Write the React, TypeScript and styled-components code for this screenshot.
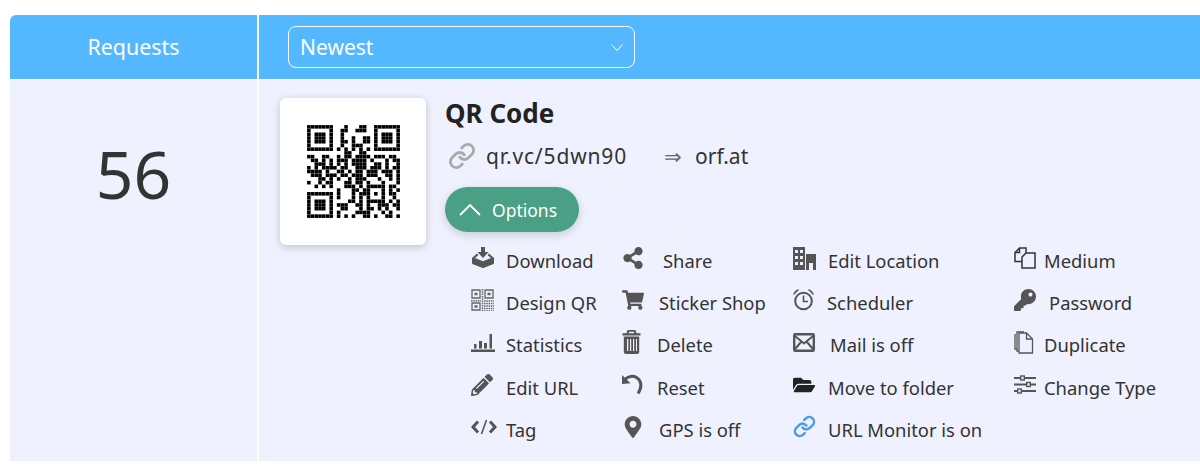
import React from "react";
import styled, { createGlobalStyle } from "styled-components";
import {
  FaShareAlt,
  FaShoppingCart,
  FaPencilAlt,
  FaMapMarkerAlt,
  FaFolderOpen,
  FaKey,
} from "react-icons/fa";
import { Link as LinkIcon } from "lucide-react";

const GlobalStyle = createGlobalStyle`
  html, body {
    margin: 0;
    padding: 0;
    background: #fff;
    font-family: "Noto Sans", "Open Sans", sans-serif;
    overflow: hidden;
  }
`;

const Page = styled.div`
  padding: 15px 0 0 10px;
`;

const HeaderRow = styled.div`
  display: grid;
  grid-template-columns: 247px 1fr;
  column-gap: 2px;
  height: 64px;
`;

const HeaderCell = styled.div`
  display: flex;
  align-items: center;
  justify-content: center;
  padding-bottom: 2px;
  box-sizing: border-box;
  color: #fff;
  font-size: 21.4px;
  background: #54b8fe;
  border-top-left-radius: 6px;
`;

const SortCell = styled.div`
  display: flex;
  align-items: center;
  padding-left: 29px;
  background: #54b8fe;
`;

const SortBox = styled.div`
  box-sizing: border-box;
  width: 347px;
  height: 42px;
  border: 1px solid #fff;
  border-radius: 8px;
  display: flex;
  align-items: center;
  justify-content: space-between;
  padding: 0 10px 0 11px;
  color: #fff;
  font-size: 21px;
`;

const BodyRow = styled.div`
  display: grid;
  grid-template-columns: 247px 1fr;
  column-gap: 2px;
  height: 381px;
  margin-top: 1px;
`;

const CountCell = styled.div`
  background: #eff1fe;
  color: #333;
  font-size: 66px;
  line-height: 90px;
  text-align: center;
  padding-top: 48px;
`;

const MainCell = styled.div`
  background: #eff1fe;
  display: flex;
  align-items: flex-start;
  gap: 19px;
  padding: 18px 0 0 21px;
`;

const QrCard = styled.div`
  flex: none;
  width: 146px;
  height: 147px;
  background: #fff;
  border-radius: 6px;
  box-shadow: 0 2px 8px rgba(0, 0, 0, 0.2);
  display: flex;
  align-items: center;
  justify-content: center;
`;

const Info = styled.div`
  flex: 1;
  min-width: 0;
`;

const Title = styled.h2`
  margin: 0;
  font-size: 26px;
  line-height: 30px;
  font-weight: 700;
  color: #222;
`;

const LinkRow = styled.div`
  display: flex;
  align-items: center;
  margin: 14px 0 0 3px;
  height: 28px;
  font-size: 21px;
  color: #333;
`;

const ShortUrl = styled.span`
  margin-left: 10px;
  letter-spacing: 0.85px;
`;

const Target = styled.span`
  margin-left: 37px;
`;

const Arrow = styled.span`
  color: #666;
  margin-right: 13px;
`;

const OptionsButton = styled.button`
  display: flex;
  align-items: center;
  gap: 10px;
  box-sizing: border-box;
  width: 134px;
  height: 45px;
  margin-top: 17px;
  padding: 0 0 0 13px;
  border: 0;
  border-radius: 23px;
  background: #4aa085;
  color: #fff;
  font-family: inherit;
  font-size: 17.5px;
  box-shadow: 0 3px 10px rgba(0, 0, 0, 0.16);
`;

const OptionGrid = styled.div`
  display: grid;
  grid-auto-flow: column;
  grid-template-rows: repeat(5, 42.2px);
  grid-template-columns: 151px 171px 221px 1fr;
  margin: 7.5px 0 0 26px;
`;

const Item = styled.div`
  display: flex;
  align-items: center;
  font-size: 18.4px;
  color: #333;
  white-space: nowrap;
`;

const IconSlot = styled.span<{ $w: number; $color?: string }>`
  flex: none;
  width: ${(p) => p.$w}px;
  display: flex;
  align-items: center;
  margin-bottom: 5px;
  color: ${(p) => p.$color || "#555"};
  font-size: 22px;
`;

// black modules of the code, 25 x 25
const QR_ROWS = [
  "#######...#...##..#######",
  "#.....#..##..###..#.....#",
  "#.###.#..#........#.###.#",
  "#.###.#..#..#..##.#.###.#",
  "#.###.#..##.#..##.#.###.#",
  "#.....#..#..###...#.....#",
  "#######.#.#.#.#.#.#######",
  "..........##..##.........",
  "##..##..#.##.####.###.##.",
  ".##.#.#.###.####.#...#.##",
  "..###.#.#.#.####..##.#..#",
  "#.#.####.##..###.###.#.##",
  "####.#..##.#.##.###.###.#",
  ".###.###.##.###.###..##.#",
  "...##.#.#..#.###...#..#.#",
  "#..#.##...##.##.#...#...#",
  "..#.#.#...###.#.#####.##.",
  "........#...##.##...#.#.#",
  "#######.#...#.###.#.#.##.",
  "#.....#.#...#.#.#...#..#.",
  "#.###.#....##.#.#####.#.#",
  "#.###.#.###..##.#..###.##",
  "#.###.#..##...#.##.#.#..#",
  "#.....#.#....####...#.#..",
  "#######.#.#.#..##.#..##.#",
];

function QrCode() {
  return (
    <svg width="93" height="93" viewBox="0 0 25 25">
      {QR_ROWS.map((row, y) =>
        row
          .split("")
          .map((c, x) =>
            c === "#" ? (
              <rect key={x + "-" + y} x={x + 0.02} y={y + 0.02} width={0.96} height={0.96} fill="#000" />
            ) : null
          )
      )}
    </svg>
  );
}

const DownloadIcon = () => (
  <svg width="24" height="22" viewBox="0 0 24 22" fill="currentColor">
    <path d="M10 0h4v5h3.500L12 11 6.500 5H10z" />
    <path d="M6 6.500 1.500 10.500c-.8.700-.8 1.300-.5 1.800v3.700c0 .600.400 1 1 1.300L11 20.800c.700.300 1.300.300 2 0l9-3.500c.600-.300 1-.700 1-1.300v-3.700c.300-.500.300-1.100-.500-1.800L18 6.500l-1.500 1.600L20 11l-8 3.300L4 11l3.500-2.900z" />
  </svg>
);

const SmallQrIcon = () => (
  <svg width="23" height="22" viewBox="0 0 23 22" fill="none" stroke="#666">
    <path strokeWidth="1.300" d="M1 1h8v8H1zM14 1h8v8h-8zM1 14h8v7H1z" />
    <path strokeWidth="2.500" d="M3.500 5h3M16.500 5h3M3.500 17.500h3" />
    <path strokeWidth="1.500" strokeDasharray="1.500 .8" d="M11.500 0v22M13 12h10M13 14.500h10M13 17h10M13 19.500h10M13 22h10M0 11.800h10" />
  </svg>
);

const StatsIcon = () => (
  <svg width="24" height="21" viewBox="0 0 24 21" fill="currentColor">
    <path d="M0 17.500h24V20H0zM3 12h2.500v4.500H3zM8 9h3v7.500H8zM13 11h3v5.500h-3zM18.500 2H21v14.500h-2.500z" />
  </svg>
);

const TrashIcon = () => (
  <svg width="19" height="24" viewBox="0 0 19 24" fill="currentColor">
    <path d="M6.500 0h6c.800 0 1.300.500 1.500 1.200l.500 2h4v2.300H.5V3.200h4l.5-2C5.200.500 5.700 0 6.500 0zM7 1.700 6.700 3.200h5.600L12 1.700z" />
    <path fillRule="evenodd" d="M1.800 6.500h15.400V22c0 1.100-.9 2-2 2H3.800c-1.100 0-2-.9-2-2zM5 9v12h1.300V9zm3 0v12h1.200V9zm3 0v12h1.200V9zm3 0v12h1V9z" />
  </svg>
);

const UndoIcon = () => (
  <svg width="22" height="21" viewBox="0 0 22 21" fill="none">
    <path d="M0 1 0 10 8.500 9.300z" fill="currentColor" />
    <path d="M3 5.500C6 2 11 1.500 14.500 3.500c5 3 6 9.500 1.500 16" stroke="currentColor" strokeWidth="3" />
  </svg>
);

const CodeIcon = () => (
  <svg width="26" height="16" viewBox="0 0 26 16" fill="none" stroke="currentColor" strokeWidth="3">
    <path d="M7 2.500 2 8l5 5.500M19 2.500 24 8l-5 5.500" />
    <path strokeWidth="1.600" d="M15.500 1 10.500 15" />
  </svg>
);

const BuildingIcon = () => (
  <svg width="23" height="23" viewBox="0 0 23 23" fill="currentColor">
    <path fillRule="evenodd" d="M0 0h12v23H0zM2 3v3h3V3zm5 0v3h3V3zM2 9v3h3V9zm5 0v3h3V9zM2 15v3h3v-3zm5 0v3h3v-3z" />
    <path fillRule="evenodd" d="M13 7h10v16h-3v-7h-4v7h-3z" />
  </svg>
);

const AlarmIcon = () => (
  <svg width="21" height="22" viewBox="0 0 21 22" fill="none" stroke="currentColor">
    <circle cx="10.500" cy="12" r="8.300" strokeWidth="2" />
    <path strokeWidth="1.600" d="M10.500 6.500V12.500H15" />
    <path d="M.8 5.500C1 3 3 1 5.500.8zM20.200 5.500C20 3 18 1 15.500.8z" fill="currentColor" strokeWidth="1" />
  </svg>
);

const MailIcon = () => (
  <svg width="22" height="19" viewBox="0 0 22 19" fill="none" stroke="currentColor">
    <rect x="1.200" y="1.200" width="19.600" height="16.600" rx="1" strokeWidth="2.400" />
    <path strokeWidth="2" d="M2 3l9 7.500L20 3M2 16l6.500-7.500M20 16l-6.500-7.500" />
  </svg>
);

const MediumIcon = () => (
  <svg width="22" height="22" viewBox="0 0 22 22" fill="none" stroke="#333" strokeWidth="1.500">
    <path d="M8 14.500H1V5.500L5.500 1H12v5" />
    <path d="M5.500 1v4.500H1" />
    <path d="M12 6h9v15H8V10z" />
  </svg>
);

const DuplicateIcon = () => (
  <svg width="20" height="23" viewBox="0 0 20 23" fill="none" stroke="currentColor" strokeWidth="1.300">
    <path d="M5 22h13.500V8L12.500 2H5z" />
    <path d="M12.500 2v6h6" />
    <path d="M5 20H3V1h7M3 18H1V3" />
  </svg>
);

const SlidersIcon = () => (
  <svg width="22" height="19" viewBox="0 0 22 19" fill="none" stroke="currentColor">
    <path strokeWidth="2" d="M0 3h6M11 3h11M0 9.500h12M17 9.500h5M0 16h3M8 16h14" />
    <rect x="6.700" y="1" width="3.600" height="4" strokeWidth="1.400" />
    <rect x="12.700" y="7.500" width="3.600" height="4" strokeWidth="1.400" />
    <rect x="3.700" y="14" width="3.600" height="4" strokeWidth="1.400" />
  </svg>
);

const ChevronUp = () => (
  <svg width="24" height="14" viewBox="0 0 24 14" fill="none" stroke="#fff" strokeWidth="1.800">
    <path d="M2 12 12 2l10 10" />
  </svg>
);

const ChevronDown = () => (
  <svg width="14" height="9" viewBox="0 0 14 9" fill="none" stroke="#fff" strokeWidth="1">
    <path d="M1.500 1.500 7 7.500l5.500-6" />
  </svg>
);

type Option = { label: string; icon: React.ReactNode; w: number; color?: string };

const OPTIONS: Option[] = [
  { label: "Download", icon: <DownloadIcon />, w: 35 },
  { label: "Design QR", icon: <SmallQrIcon />, w: 35 },
  { label: "Statistics", icon: <StatsIcon />, w: 35 },
  { label: "Edit URL", icon: <FaPencilAlt />, w: 35 },
  { label: "Tag", icon: <CodeIcon />, w: 35 },
  { label: "Share", icon: <FaShareAlt />, w: 41 },
  { label: "Sticker Shop", icon: <FaShoppingCart />, w: 37 },
  { label: "Delete", icon: <TrashIcon />, w: 35 },
  { label: "Reset", icon: <UndoIcon />, w: 35 },
  { label: "GPS is off", icon: <FaMapMarkerAlt />, w: 37 },
  { label: "Edit Location", icon: <BuildingIcon />, w: 35 },
  { label: "Scheduler", icon: <AlarmIcon />, w: 34 },
  { label: "Mail is off", icon: <MailIcon />, w: 37 },
  { label: "Move to folder", icon: <FaFolderOpen />, w: 35, color: "#222" },
  { label: "URL Monitor is on", icon: <LinkIcon size={23} strokeWidth={2.6} />, w: 35, color: "#4a9be8" },
  { label: "Medium", icon: <MediumIcon />, w: 30 },
  { label: "Password", icon: <FaKey />, w: 35 },
  { label: "Duplicate", icon: <DuplicateIcon />, w: 30 },
  { label: "Change Type", icon: <SlidersIcon />, w: 30 },
];

export default function App() {
  return (
    <Page>
      <GlobalStyle />
      <HeaderRow>
        <HeaderCell>Requests</HeaderCell>
        <SortCell>
          <SortBox>
            Newest
            <ChevronDown />
          </SortBox>
        </SortCell>
      </HeaderRow>
      <BodyRow>
        <CountCell>56</CountCell>
        <MainCell>
          <QrCard>
            <QrCode />
          </QrCard>
          <Info>
            <Title>QR Code</Title>
            <LinkRow>
              <LinkIcon size={28} strokeWidth={2.4} color="#aaa" />
              <ShortUrl>qr.vc/5dwn90</ShortUrl>
              <Target>
                <Arrow>⇒</Arrow>orf.at
              </Target>
            </LinkRow>
            <OptionsButton>
              <ChevronUp />
              Options
            </OptionsButton>
            <OptionGrid>
              {OPTIONS.map((o) => (
                <Item key={o.label}>
                  <IconSlot $w={o.w} $color={o.color}>
                    {o.icon}
                  </IconSlot>
                  {o.label}
                </Item>
              ))}
            </OptionGrid>
          </Info>
        </MainCell>
      </BodyRow>
    </Page>
  );
}
